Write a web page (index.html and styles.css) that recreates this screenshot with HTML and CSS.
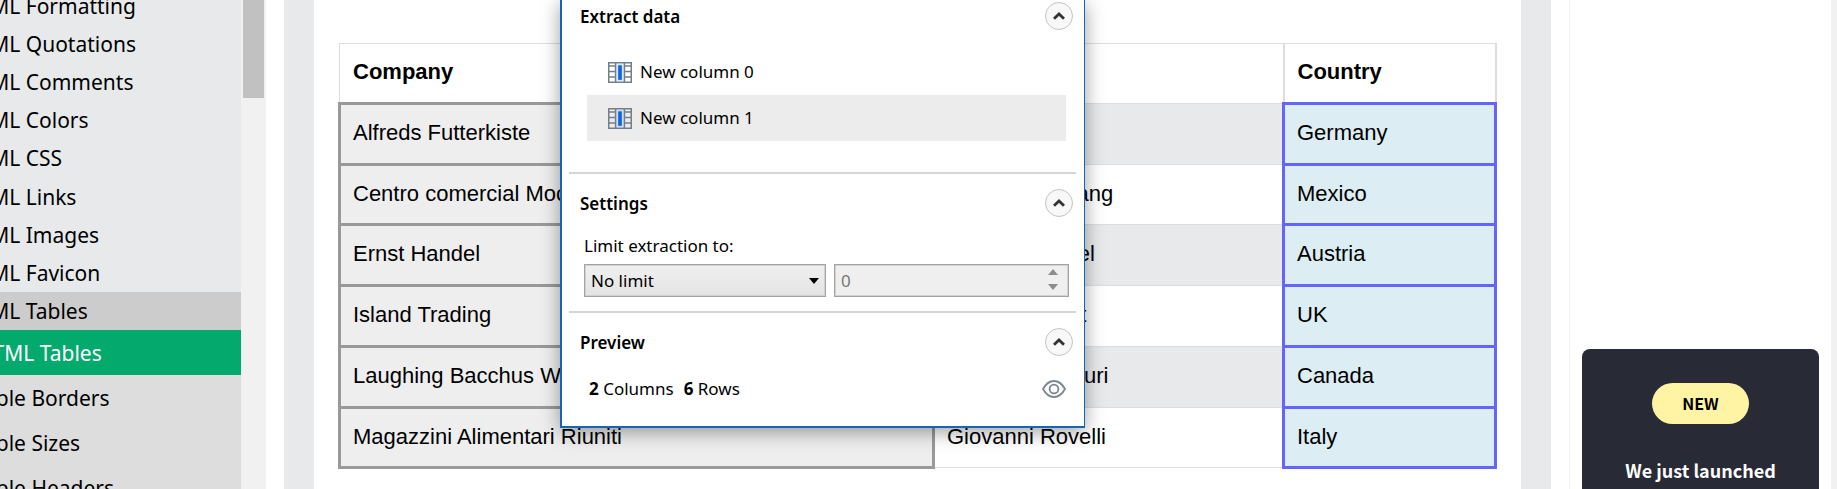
FILE: index.html
```html
<!DOCTYPE html>
<html lang="en">
<head>
<meta charset="utf-8">
<title>HTML Tables</title>
<link rel="stylesheet" href="styles.css">
</head>
<body>
<svg class="defs" aria-hidden="true">
  <symbol id="icon-column" viewBox="0 0 24 21">
    <path fill="none" stroke="#737f8a" stroke-width="1.600" d="M.7.7h22.6v19.6H.7zM7.6.7v19.600M16.4.7v19.600M.7 4h6.600M.7 9.500h6.600M.7 15h6.600M16.700 4h6.600M16.700 9.500h6.600M16.700 15h6.600"/>
    <path fill="#a9cbf7" d="M9.500 2.500h5v16h-5z"/>
    <path fill="#0d66e0" d="M10.200 3.400h3.600v14.400h-3.600z"/>
  </symbol>
  <symbol id="icon-up" viewBox="0 0 12 8">
    <path fill="none" stroke="#333" stroke-width="2.800" d="M1 6.800 6 2l5 4.800"/>
  </symbol>
</svg>
<div class="page">
  <nav class="sidebar" aria-label="Tutorial">
    <ul class="menu">
      <li><a href="#">HTML Formatting</a></li>
      <li><a href="#">HTML Quotations</a></li>
      <li><a href="#">HTML Comments</a></li>
      <li><a href="#">HTML Colors</a></li>
      <li><a href="#">HTML CSS</a></li>
      <li><a href="#">HTML Links</a></li>
      <li><a href="#">HTML Images</a></li>
      <li><a href="#">HTML Favicon</a></li>
      <li class="open"><a href="#">HTML Tables</a></li>
    </ul>
    <ul class="submenu">
      <li class="current"><a href="#">HTML Tables</a></li>
      <li><a href="#">Table Borders</a></li>
      <li><a href="#">Table Sizes</a></li>
      <li><a href="#">Table Headers</a></li>
    </ul>
  </nav>
  <div class="scrollbar"><div class="thumb"></div></div>
  <main class="content">
    <table class="companies">
      <colgroup><col class="col-company"><col class="col-contact"><col class="col-country"></colgroup>
      <thead>
        <tr><th>Company</th><th>Contact</th><th>Country</th></tr>
      </thead>
      <tbody>
        <tr><td class="picked">Alfreds Futterkiste</td><td>Maria Anders</td><td class="active">Germany</td></tr>
        <tr><td class="picked">Centro comercial Moctezuma</td><td>Francisco Chang</td><td class="active">Mexico</td></tr>
        <tr><td class="picked">Ernst Handel</td><td>Roland Mendel</td><td class="active">Austria</td></tr>
        <tr><td class="picked">Island Trading</td><td>Helen Bennett</td><td class="active">UK</td></tr>
        <tr><td class="picked">Laughing Bacchus Winecellars</td><td>Yoshi Tannamuri</td><td class="active">Canada</td></tr>
        <tr><td class="picked">Magazzini Alimentari Riuniti</td><td>Giovanni Rovelli</td><td class="active">Italy</td></tr>
      </tbody>
    </table>
    <div class="dialog" role="dialog" aria-label="Extract data">
      <section class="panel">
        <header class="panel-head">
          <h2>Extract data</h2>
          <button class="toggle" aria-label="Collapse extract data"><svg><use href="#icon-up"/></svg></button>
        </header>
        <ul class="columns">
          <li><svg><use href="#icon-column"/></svg>New column 0</li>
          <li class="selected"><svg><use href="#icon-column"/></svg>New column 1</li>
        </ul>
      </section>
      <section class="panel">
        <header class="panel-head">
          <h2>Settings</h2>
          <button class="toggle" aria-label="Collapse settings"><svg><use href="#icon-up"/></svg></button>
        </header>
        <label class="limit-label" for="limit">Limit extraction to:</label>
        <div class="controls">
          <div class="select-box">
            <select id="limit"><option>No limit</option></select>
            <svg class="caret" viewBox="0 0 10 6"><path d="M0 0h10L5 6z"/></svg>
          </div>
          <div class="spin-box">
            <input type="text" value="0" aria-label="Row limit" disabled>
            <svg class="spin" viewBox="0 0 10 21"><path d="M0 6h10L5 0zM0 15h10l-5 6z"/></svg>
          </div>
        </div>
      </section>
      <section class="panel">
        <header class="panel-head">
          <h2>Preview</h2>
          <button class="toggle" aria-label="Collapse preview"><svg><use href="#icon-up"/></svg></button>
        </header>
        <div class="summary">
          <span><b>2</b> Columns</span>
          <span><b>6</b> Rows</span>
          <button class="eye" aria-label="Show preview">
            <svg viewBox="0 0 24 18"><g fill="none" stroke="#7a8691" stroke-width="1.800"><path d="M1 9c3-5.400 6.500-8 11-8s8 2.600 11 8c-3 5.400-6.500 8-11 8S4 14.400 1 9z"/><circle cx="12" cy="9" r="4.400"/></g></svg>
          </button>
        </div>
      </section>
    </div>
  </main>
  <aside class="rail">
    <div class="rail-inner">
      <div class="promo">
        <span class="pill">NEW</span>
        <p>We just launched</p>
      </div>
    </div>
  </aside>
  <div class="edge"></div>
</div>
</body>
</html>
```

FILE: styles.css
```css
* { box-sizing: border-box; }
body { margin: 0; background: #fff; color: #000; overflow: hidden; }
ul { list-style: none; margin: 0; padding: 0; }
h2, p { margin: 0; }
a { color: inherit; text-decoration: none; }
button { padding: 0; font: inherit; }
.defs { display: none; }

.page { display: flex; height: 100vh; overflow: hidden; }

.sidebar {
  flex: 0 0 241px;
  overflow: hidden;
  background: #e7e9eb;
  font-family: "Segoe UI", "Noto Sans", sans-serif;
  font-size: 21px;
  white-space: nowrap;
}
.sidebar li { display: flex; align-items: center; padding-top: 1px; }
.menu { display: grid; grid-auto-rows: 1fr; height: 344px; margin-top: -14px; }
.menu a { margin-left: -37px; }
.open { background: #ccc; }
.submenu { background: #ddd; }
.submenu li { height: 45px; }
.submenu a { margin-left: -26px; }
.submenu .current { background: #04aa6d; color: #fff; }
.submenu .current a { margin-left: -23px; }

.scrollbar { flex: 0 0 25px; padding: 0 2px; background: #f1f1f1; }
.thumb { height: 98px; background: #c1c1c1; }

.content {
  position: relative;
  flex: 1;
  margin-left: 18px;
  padding: 43px 24px 0;
  border: solid #e7e9eb;
  border-width: 0 30px;
}
.companies {
  width: 100%;
  table-layout: fixed;
  border-collapse: collapse;
  font-family: "Liberation Sans", Arial, sans-serif;
  font-size: 22px;
  line-height: 26px;
  white-space: nowrap;
}
.col-contact { width: 350px; }
.col-country { width: 212px; }
.companies th, .companies td { height: 61px; padding: 0 12px 2px; border: 1px solid #ddd; text-align: left; }
.companies th { height: 60px; padding-left: 13px; }
.companies tr:nth-child(4n + 2) td { height: 60px; }
.companies th:last-child { border-width: 1px 2px; }
.companies tbody tr:nth-child(odd) { background: #e7e9eb; }
.companies .picked { border: 3px solid #999; background: #eee; }
.companies .active { border: 3px solid #6464ff; background: #dcedf3; }

.dialog {
  position: absolute;
  top: 0;
  left: 246px;
  width: 525px;
  padding: 2px 8px 25px 7px;
  border: solid #1766b5;
  border-width: 0 1px 2px 2px;
  background: #fff;
  box-shadow: 0 4px 18px rgba(0, 0, 0, .38);
  font-family: "Segoe UI", "Noto Sans", sans-serif;
  font-size: 17px;
  line-height: 24px;
}
.panel + .panel { border-top: 2px solid #d6d6d6; padding-top: 15px; }
.panel-head { display: flex; align-items: center; justify-content: space-between; height: 28px; padding: 0 3px 0 11px; }
.panel-head h2 { margin-top: 2px; font-size: 17px; font-weight: 600; line-height: 24px; }
.toggle {
  display: flex;
  align-items: center;
  justify-content: center;
  width: 28px;
  height: 28px;
  border: 1px solid #c3c3c3;
  border-radius: 50%;
  background: #f8f8f8;
}
.toggle svg { width: 12px; height: 8px; }
.columns { padding: 19px 10px 31px 18px; }
.columns li { display: flex; align-items: center; gap: 8px; height: 46px; padding-left: 21px; }
.columns svg { width: 24px; height: 21px; }
.selected { background: #ececec; }
.limit-label { display: block; margin: 17px 0 6px 15px; }
.controls { display: flex; gap: 8px; height: 33px; margin: 0 7px 14px 15px; }
.select-box { position: relative; flex: 0 0 242px; }
.spin-box { position: relative; flex: 1; }
.controls select, .controls input {
  width: 100%;
  height: 33px;
  margin: 0;
  padding: 0 6px;
  appearance: none;
  border: 1px solid #a3a3a3;
  border-radius: 0;
  box-shadow: inset 0 0 0 1px #d2d2d2;
  color: #000;
  font: inherit;
}
.controls select { background: linear-gradient(#f0f0f0, #e3e3e3); }
.controls input { background: #efefef; color: #777; }
.caret { position: absolute; top: 14px; right: 7px; width: 10px; height: 6px; pointer-events: none; }
.spin { position: absolute; top: 5px; right: 11px; width: 10px; height: 21px; fill: #8c8c8c; }
.summary { display: flex; align-items: center; gap: 10px; margin: 21px 10px 0 20px; }
.eye { display: flex; margin-left: auto; border: 0; background: none; }
.eye svg { width: 24px; height: 18px; }

.rail { flex: 0 0 280px; padding-left: 18px; }
.rail-inner { height: 100%; padding: 349px 12px 0; border-left: 1px solid #f1f1f1; }
.promo {
  display: flex;
  flex-direction: column;
  align-items: center;
  gap: 31px;
  height: 240px;
  padding-top: 34px;
  border-radius: 8px;
  background: #282a35;
  color: #fff;
  font-family: "Source Sans Pro", "Noto Sans CJK SC", sans-serif;
  font-size: 18px;
  font-weight: 700;
  line-height: 30px;
}
.pill { padding: 5px 30px 6px; border-radius: 21px; background: #fff4a3; color: #000; font-size: 16px; }
.edge { flex: 0 0 6px; background: #f1f1f1; }
```
